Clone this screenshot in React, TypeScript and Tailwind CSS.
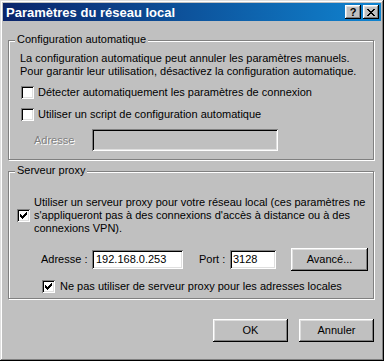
import React from "react";

const raised =
  "shadow-[inset_-1px_-1px_#000000,inset_1px_1px_#ffffff,inset_-2px_-2px_#808080,inset_2px_2px_#dfdfdf]";
const sunken =
  "shadow-[inset_1px_1px_#808080,inset_-1px_-1px_#ffffff,inset_2px_2px_#000000,inset_-2px_-2px_#dfdfdf]";

function Check() {
  return (
    <svg width="7" height="7" viewBox="0 0 7 7" shapeRendering="crispEdges">
      <path
        fill="#000"
        d="M6 0h1v3h-1zM5 1h1v3h-1zM4 2h1v3h-1zM3 3h1v3h-1zM2 4h1v3h-1zM1 3h1v3h-1zM0 2h1v3h-1z"
      />
    </svg>
  );
}

function CheckBox({ checked }: { checked?: boolean }) {
  return (
    <div
      className={`w-[13px] h-[13px] shrink-0 bg-white flex items-center justify-center ${sunken}`}
    >
      {checked && <Check />}
    </div>
  );
}

function Group({
  label,
  className,
  children,
}: {
  label: string;
  className?: string;
  children: React.ReactNode;
}) {
  return (
    <div
      className={`relative w-[366px] border border-[#808080] shadow-[inset_1px_1px_#ffffff,1px_1px_#ffffff] ${className ?? ""}`}
    >
      <span className="absolute left-[6px] -top-[8px] bg-[#c0c0c0] px-[2px] leading-[13px]">
        {label}
      </span>
      {children}
    </div>
  );
}

export default function App() {
  return (
    <div
      className={`w-[384px] h-[361px] bg-[#c0c0c0] p-[3px] flex flex-col text-[11px] text-black font-['Liberation_Sans',Arial,sans-serif] shadow-[inset_-1px_-1px_#000000,inset_1px_1px_#dfdfdf,inset_-2px_-2px_#808080,inset_2px_2px_#ffffff]`}
    >
      {/* Title bar */}
      <div className="h-[18px] flex items-center pl-[3px] pr-[2px] bg-[linear-gradient(to_right,#0a246a,#1084d0)]">
        <span className="text-white font-bold text-[13px] leading-none flex-1">
          Paramètres du réseau local
        </span>
        <div className="flex gap-[2px]">
          <div
            className={`w-[16px] h-[14px] bg-[#c0c0c0] flex items-center justify-center font-bold text-[11px] leading-none ${raised}`}
          >
            ?
          </div>
          <div
            className={`w-[16px] h-[14px] bg-[#c0c0c0] flex items-center justify-center ${raised}`}
          >
            <svg width="8" height="7" viewBox="0 0 8 7" shapeRendering="crispEdges">
              <path
                fill="#000"
                d="M0 0h2v1h-2zM6 0h2v1h-2zM1 1h2v1h-2zM5 1h2v1h-2zM2 2h4v1h-4zM3 3h2v1h-2zM2 4h4v1h-4zM1 5h2v1h-2zM5 5h2v1h-2zM0 6h2v1h-2zM6 6h2v1h-2z"
              />
            </svg>
          </div>
        </div>
      </div>

      <div className="flex flex-col pl-[5px] pt-[19px]">
        {/* Group 1 */}
        <Group label="Configuration automatique" className="h-[120px]">
          <div className="pl-[11px] pt-[11px] leading-[13px]">
            <div>La configuration automatique peut annuler les paramètres manuels.</div>
            <div>Pour garantir leur utilisation, désactivez la configuration automatique.</div>
          </div>
          <div className="flex items-center gap-[4px] pl-[12px] mt-[8px] h-[13px]">
            <CheckBox />
            <span>Détecter automatiquement les paramètres de connexion</span>
          </div>
          <div className="flex items-center gap-[4px] pl-[12px] mt-[9px] h-[13px]">
            <CheckBox />
            <span>Utiliser un script de configuration automatique</span>
          </div>
          <div className="flex items-center pl-[25px] mt-[8px]">
            <span className="w-[58px] text-[#808080] [text-shadow:1px_1px_#ffffff]">
              Adresse
            </span>
            <div className={`w-[186px] h-[22px] bg-[#c0c0c0] ${sunken}`} />
          </div>
        </Group>

        {/* Group 2 */}
        <Group label="Serveur proxy" className="mt-[11px] h-[128px]">
          <div className="flex items-center gap-[4px] pl-[8px] mt-[24px]">
            <CheckBox checked />
            <div className="leading-[13px]">
              <div>Utiliser un serveur proxy pour votre réseau local (ces paramètres ne</div>
              <div>s'appliqueront pas à des connexions d'accès à distance ou à des</div>
              <div>connexions VPN).</div>
            </div>
          </div>
          <div className="flex items-center pl-[32px] mt-[13px] h-[23px]">
            <span className="w-[51px]">Adresse :</span>
            <div
              className={`w-[91px] h-[19px] bg-white flex items-center pl-[4px] ${sunken}`}
            >
              192.168.0.253
            </div>
            <span className="ml-[16px] w-[31px]">Port :</span>
            <div
              className={`w-[46px] h-[19px] bg-white flex items-center pl-[3px] ${sunken}`}
            >
              3128
            </div>
            <button
              className={`ml-[15px] w-[77px] h-[23px] bg-[#c0c0c0] flex items-center justify-center ${raised}`}
            >
              Avancé...
            </button>
          </div>
          <div className="flex items-center gap-[5px] pl-[33px] mt-[9px] h-[13px]">
            <CheckBox checked />
            <span>Ne pas utiliser de serveur proxy pour les adresses locales</span>
          </div>
        </Group>

        {/* Buttons */}
        <div className="flex justify-end gap-[11px] mt-[20px] pr-[7px]">
          <button
            className={`w-[75px] h-[23px] bg-[#c0c0c0] flex items-center justify-center ${raised}`}
          >
            OK
          </button>
          <button
            className={`w-[75px] h-[23px] bg-[#c0c0c0] flex items-center justify-center ${raised}`}
          >
            Annuler
          </button>
        </div>
      </div>
    </div>
  );
}
